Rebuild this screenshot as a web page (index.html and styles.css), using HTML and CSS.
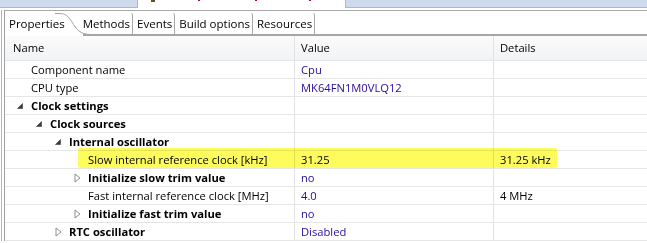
FILE: index.html
```html
<!DOCTYPE html>
<html>
<head>
<title>Component Inspector</title>
<meta charset="utf-8">
<link rel="stylesheet" href="styles.css">
</head>
<body>
<div class="topStrip">
	<div class="topTab"></div>
	<div class="topCut">
		<span class="speck icon"></span>
		<span class="speck s1"></span>
		<span class="speck s2"></span>
		<span class="speck s3"></span>
	</div>
	<div class="topTab fill"></div>
</div>
<div class="frame">
	<div class="folder">
		<div class="tabs">
			<div class="tab sel">Properties</div>
			<svg class="curve" width="36" height="24" viewBox="0 0 36 24"><path d="M0 1.5 L4 1.5 C11 1.5 13 4 17 10 C21 17 25 22.5 36 22.5" fill="none" stroke="#a4a4a4"/></svg>
			<div class="tab first">Methods</div>
			<div class="tab">Events</div>
			<div class="tab">Build options</div>
			<div class="tab">Resources</div>
			<div class="tabFill"></div>
		</div>
		<div class="grid">
			<div class="row head">
				<div class="c name">Name</div>
				<div class="c val">Value</div>
				<div class="c det">Details</div>
			</div>
			<div class="row">
				<div class="c name lvl0"><span class="tw"></span>Component name</div>
				<div class="c val v">Cpu</div>
				<div class="c det"></div>
			</div>
			<div class="row">
				<div class="c name lvl0"><span class="tw"></span>CPU type</div>
				<div class="c val v">MK64FN1M0VLQ12</div>
				<div class="c det"></div>
			</div>
			<div class="row">
				<div class="c name lvl0 b"><span class="tw"><svg width="6" height="6"><path d="M5.5 0.5 L5.5 5.5 L0.5 5.5 Z" fill="#3c3c3c" stroke="#3c3c3c" stroke-width="0.6"/></svg></span>Clock settings</div>
				<div class="c val"></div>
				<div class="c det"></div>
			</div>
			<div class="row">
				<div class="c name lvl1 b"><span class="tw"><svg width="6" height="6"><path d="M5.5 0.5 L5.5 5.5 L0.5 5.5 Z" fill="#3c3c3c" stroke="#3c3c3c" stroke-width="0.6"/></svg></span>Clock sources</div>
				<div class="c val"></div>
				<div class="c det"></div>
			</div>
			<div class="row">
				<div class="c name lvl2 b"><span class="tw"><svg width="6" height="6"><path d="M5.5 0.5 L5.5 5.5 L0.5 5.5 Z" fill="#3c3c3c" stroke="#3c3c3c" stroke-width="0.6"/></svg></span>Internal oscillator</div>
				<div class="c val"></div>
				<div class="c det"></div>
			</div>
			<div class="row hl">
				<div class="c name lvl3"><span class="tw"></span>Slow internal reference clock [kHz]</div>
				<div class="c val">31.25</div>
				<div class="c det">31.25 kHz</div>
				<div class="mark"></div>
			</div>
			<div class="row">
				<div class="c name lvl3 b"><span class="tw"><svg width="7" height="10"><path d="M1 1 L6 5 L1 9 Z" fill="#fff" stroke="#8c8c8c"/></svg></span>Initialize slow trim value</div>
				<div class="c val v">no</div>
				<div class="c det"></div>
			</div>
			<div class="row">
				<div class="c name lvl3"><span class="tw"></span>Fast internal reference clock [MHz]</div>
				<div class="c val v">4.0</div>
				<div class="c det">4 MHz</div>
			</div>
			<div class="row">
				<div class="c name lvl3 b"><span class="tw"><svg width="7" height="10"><path d="M1 1 L6 5 L1 9 Z" fill="#fff" stroke="#8c8c8c"/></svg></span>Initialize fast trim value</div>
				<div class="c val v">no</div>
				<div class="c det"></div>
			</div>
			<div class="row">
				<div class="c name lvl2 b"><span class="tw"><svg width="7" height="10"><path d="M1 1 L6 5 L1 9 Z" fill="#fff" stroke="#8c8c8c"/></svg></span>RTC oscillator</div>
				<div class="c val v">Disabled</div>
				<div class="c det"></div>
			</div>
		</div>
	</div>
</div>
</body>
</html>
```
FILE: styles.css
```css
body {margin: 0;font-family: "Open Sans", sans-serif;font-size: 11.2px;color: #000;background: #fff;overflow: hidden;}
.topStrip {display: flex;height: 8px;}
.topTab {width: 138px;background: #cedbec;border-right: 1px solid #a9b8cc;border-bottom: 1px solid #a9b8cc;box-sizing: border-box;}
.topTab.fill {flex: 1;border-right: none;border-left: 1px solid #a9b8cc;}
.topCut {width: 207px;display: flex;align-items: flex-start;}
.speck {height: 1px;width: 2px;background: #b01030;}
.speck.icon {width: 4px;height: 2px;background: #6a5020;margin-left: 13px;}
.s1 {margin-left: 43px;}
.s2 {margin-left: 55px;}
.s3 {margin-left: 52px;}
.frame {margin-left: 1px;border-left: 1px solid #b4b4b4;padding-left: 2px;}
.folder {border-left: 1px solid #a0a0a0;border-top: 1px solid #a8a8a8;margin-top: 2px;padding-top: 1px;}
.tabs {display: flex;height: 24px;font-size: 11.5px;}
.tab {padding: 0 2px 0 4px;line-height: 21px;border-right: 1px solid #a8a8a8;border-top-right-radius: 4px;border-top: 1px solid transparent;border-bottom: 2px solid #a6a6a6;}
.tab.sel {padding: 0 0 0 4px;border: none;border-bottom: 2px solid #fff;background: transparent;position: relative;z-index: 1;line-height: 23px;}
.tab.first {margin-left: -8px;padding-left: 0;}
.curve {margin-left: -10px;flex: none;}
.tabFill {flex: 1;border-bottom: 2px solid #a6a6a6;}
.grid {display: flex;flex-direction: column;}
.row {display: grid;grid-template-columns: 290px 199px 1fr;height: 18px;border-bottom: 1px solid #e6e6e6;box-sizing: border-box;position: relative;}
.row.head {height: 25px;background: linear-gradient(#fbfbfc, #f1f3f5);border-bottom: 1px solid #e4e6e8;}
.c {line-height: 17px;border-right: 1px solid #e2e2e2;white-space: nowrap;overflow: hidden;display: flex;align-items: center;}
.head .c {line-height: 24px;}
.head .name {padding-left: 8px;}
.val {padding-left: 6px;}
.det {padding-left: 6px;border-right: none;}
.v {color: #2a0a9c;}
.b {font-weight: bold;}
.tw {width: 14px;flex: none;display: flex;align-items: center;}
.lvl0 {padding-left: 12px;}
.lvl1 {padding-left: 31px;}
.lvl2 {padding-left: 50px;}
.lvl3 {padding-left: 69px;}
.mark {position: absolute;left: 73px;width: 479px;top: -3px;bottom: 0;background: #fdfc5c;border-radius: 2px;mix-blend-mode: multiply;}
```
